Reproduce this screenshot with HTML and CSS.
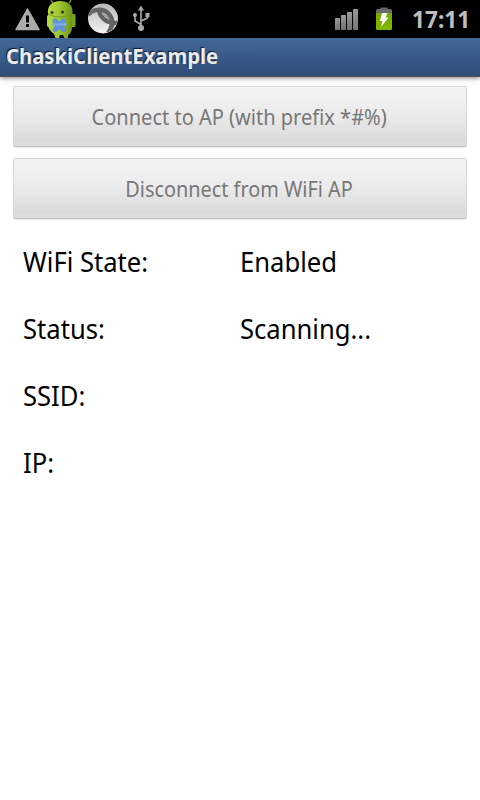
FILE: index.html
```html
<!DOCTYPE html>
<html lang="en">
<head>
<meta charset="utf-8">
<title>ChaskiClientExample</title>
<link rel="stylesheet" href="styles.css">
</head>
<body>
<header class="status">
  <svg class="icons" width="160" height="38" viewBox="0 0 160 38">
    <defs>
      <linearGradient id="droid" x1="0" x2="1"><stop offset="0" stop-color="#b9dc45"/><stop offset=".55" stop-color="#98c02e"/><stop offset="1" stop-color="#6b9412"/></linearGradient>
      <linearGradient id="ball" x1="0" y1="0" x2="0" y2="1"><stop offset="0" stop-color="#b5b5b5"/><stop offset="1" stop-color="#f6f6f6"/></linearGradient>
      <clipPath id="disc"><circle cx="103" cy="18.5" r="14.6"/></clipPath>
    </defs>
    <path d="M27.5 9 39 29.5H16Z" fill="#aaa" stroke="#aaa" stroke-width="1.5" stroke-linejoin="round"/>
    <path d="M26 15.500h3v7h-3zM26 24h3v3h-3z" fill="#000"/>
    <path d="M53 3 51 0M69 3 71 0" stroke="#6c8c20" stroke-width="1.5"/>
    <rect x="68" y="14" width="7.500" height="13" rx="1.500" fill="#7ba51d"/>
    <path d="M48 14C47 6 52 1 60 1s13 4 12.500 11L72 27c0 4-1.500 7-4 8v3h-3.500l-1.500-3h-3l-1 3h-3.500l-1.500-4c-4-3-6-6-6-10z" fill="url(#droid)"/>
    <path d="M48 14q11 6 24 0" stroke="#739c1e" stroke-width="1" fill="none"/>
    <rect x="47" y="15" width="3.500" height="12" rx="1.700" fill="#b2d744"/>
    <circle cx="52" cy="12.500" r="1.500" fill="#343c16"/><circle cx="62.500" cy="12" r="1.600" fill="#343c16"/>
    <path d="m55 21 8.500 8.500M63.500 21 55 29.500" stroke="#5f92d8" stroke-width="5" stroke-linecap="round"/>
    <path d="M53.500 24.500h12" stroke="#7eacea" stroke-width="2.500" stroke-linecap="round"/>
    <circle cx="103" cy="18.500" r="15" fill="url(#ball)"/>
    <g clip-path="url(#disc)" fill="none" stroke="#636363">
      <path d="M88 15C92 9 103 8 108 13c4 4 5 8 4 13" stroke-width="4.500"/>
      <path d="M99 8c0 9 7 16 20 15M112 22q0 6-4 11" stroke-width="4.500"/>
      <path d="M102 14q5 1 7 6" stroke="#999" stroke-width="1.500"/>
    </g>
    <path d="M141 28V9M141 24.500l-6-3.500v-5M141 21l6.500-3v-4" stroke="#aaa" stroke-width="1.600" fill="none" stroke-linejoin="round"/>
    <path d="m141 5.500 3 5h-6z" fill="#aaa"/><circle cx="141" cy="28" r="3" fill="#aaa"/><circle cx="135" cy="15" r="2" fill="#aaa"/><path d="M145.500 13h4v4h-4z" fill="#aaa"/>
  </svg>
  <svg class="icons" width="75" height="38" viewBox="330 0 75 38">
    <defs>
      <linearGradient id="bars" x1="0" y1="0" x2="0" y2="1"><stop offset="0" stop-color="#999"/><stop offset="1" stop-color="#747474"/></linearGradient>
      <linearGradient id="cell" x1="0" y1="0" x2="0" y2="1"><stop offset="0" stop-color="#78a800"/><stop offset="1" stop-color="#84b604"/></linearGradient>
    </defs>
    <g fill="url(#bars)"><rect x="335" y="18" width="5" height="12" rx=".6"/><rect x="341" y="15" width="5" height="15" rx=".6"/><rect x="347" y="12" width="5" height="18" rx=".6"/><rect x="353" y="9" width="5" height="21" rx=".6"/></g>
    <path d="M376 13V10.500q0-1.500 1.500-1.500h3V7.500h7V9h3q1.500 0 1.500 1.500V13z" fill="#696969"/>
    <path d="M376 13h16v15.500q0 1.500-1.500 1.500h-13q-1.500 0-1.500-1.500z" fill="url(#cell)"/>
    <path d="M382 13h5.500l-2 4.500h3L381 27l1.500-6H380z" fill="#fff"/>
  </svg>
  <time class="clock">17:11</time>
</header>
<h1 class="title"><span class="title-text">ChaskiClientExample</span></h1>
<main class="content">
  <button class="btn" disabled><span class="connect">Connect to AP (with prefix *#%)</span></button>
  <button class="btn" disabled><span class="disconnect">Disconnect from WiFi AP</span></button>
  <dl class="info">
    <dt><span>WiFi State:</span></dt><dd><span>Enabled</span></dd>
    <dt><span>Status:</span></dt><dd><span>Scanning...</span></dd>
    <dt><span>SSID:</span></dt><dd></dd>
    <dt><span>IP:</span></dt><dd></dd>
  </dl>
</main>
</body>
</html>
```
FILE: styles.css
```css
* { box-sizing: border-box; }
body {
  margin: 0;
  height: 800px;
  overflow: hidden;
  background: #fff;
  color: #000;
  font-family: "Noto Sans", "Open Sans", sans-serif;
}
span { display: inline-block; white-space: nowrap; }
.status {
  height: 38px;
  background: #000;
  display: flex;
}
.icons { display: block; flex: none; }
.icons + .icons { margin-left: 170px; }
.clock {
  margin-left: 7px;
  color: #bebebe;
  font-size: 24px;
  font-weight: 700;
  line-height: 38px;
  transform: scaleX(.945);
  transform-origin: 0 50%;
}
.title {
  margin: 0;
  height: 39px;
  padding-left: 6px;
  background: linear-gradient(#426899, #304d77);
  border-bottom: 1px solid #505050;
  box-shadow: 0 1px 5px rgba(0, 0, 0, .5);
  color: #ececec;
  font-size: 21px;
  line-height: 37px;
  text-shadow: -1px -1px 1px #10192a;
}
.title-text { transform: scaleX(.965); transform-origin: 0 50%; }
.content { padding: 9px 13px 0; }
.btn {
  display: flex;
  align-items: center;
  justify-content: center;
  width: 100%;
  height: 61px;
  margin: 0 0 11px;
  padding: 0 1px 2px 0;
  border: 1px solid #d6d6d6;
  border-bottom-color: #c1c1c1;
  border-radius: 2px;
  background: linear-gradient(#f4f4f4, #ececec 45%, #dadada 92%, #dedede);
  box-shadow: 0 1px 1px rgba(0, 0, 0, .1);
  color: #777;
  font: 22px "Noto Sans", "Open Sans", sans-serif;
}
.connect { transform: scaleX(.91); }
.disconnect { transform: scaleX(.902); }
.info {
  display: grid;
  grid-template-columns: 217px 1fr;
  grid-auto-rows: 67px;
  margin: -2px 0 0;
  padding-left: 10px;
  font-size: 28px;
  line-height: 67px;
}
.info dd { margin: 0; }
.info span { transform: scaleX(.914); transform-origin: 0 50%; }
```
